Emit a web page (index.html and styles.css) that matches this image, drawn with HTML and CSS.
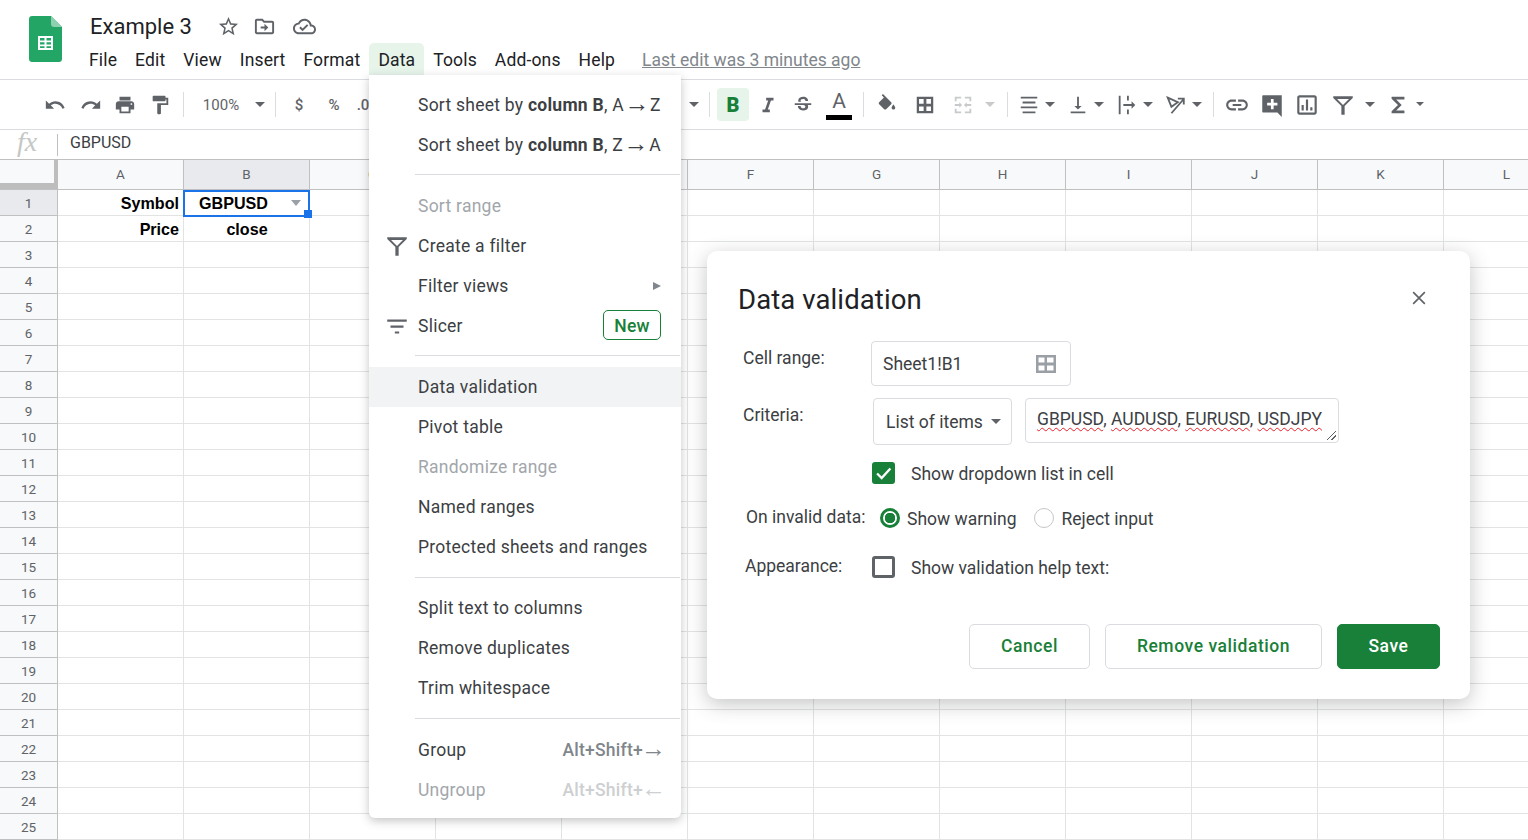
FILE: index.html
```html
<!DOCTYPE html>
<html lang="en">
<head>
    <meta charset="UTF-8">
    <title>Example 3 - Google Sheets</title>
    <link rel="stylesheet" href="styles.css">
</head>
<body>

    <header class="topbar">
        <svg class="logo" viewBox="0 0 33 46">
            <path d="M3 0h19l11 11v32c0 1.7-1.3 3-3 3H3c-1.7 0-3-1.3-3-3V3c0-1.7 1.300-3 3-3z" fill="#23a566"/>
            <path d="M22 0l11 11h-8c-1.700 0-3-1.300-3-3z" fill="#8ed1b1"/>
            <path d="M9 20h15v14H9zm2 2v2.500h4.500V22zm6.500 0v2.500H22V22zM11 26.200v2.300h4.500v-2.300zm6.500 0v2.300H22v-2.300zM11 30.200V32h4.500v-1.800zm6.500 0V32H22v-1.800z" fill="#fff" fill-rule="evenodd"/>
        </svg>
        <div class="topbar-main">
            <div class="title-row">
                <span class="doc-title">Example 3</span>
                <svg class="title-icon star" viewBox="0 0 24 24"><path d="M22 9.240l-7.190-.62L12 2 9.190 8.630 2 9.240l5.460 4.730L5.820 21 12 17.270 18.180 21l-1.630-7.030L22 9.240zM12 15.400l-3.760 2.270 1-4.280-3.320-2.880 4.380-.38L12 6.100l1.710 4.040 4.380.38-3.320 2.880 1 4.280L12 15.400z"/></svg>
                <svg class="title-icon folder" viewBox="0 0 24 24"><path d="M20 6h-8l-2-2H4c-1.100 0-2 .9-2 2v12c0 1.100.9 2 2 2h16c1.100 0 2-.9 2-2V8c0-1.100-.9-2-2-2zm0 12H4V6h5.170l2 2H20v10zm-8-1v-3H8v-2h4V9l4 4-4 4z"/></svg>
                <svg class="title-icon cloud" viewBox="0 0 24 24"><path d="M19.350 10.040C18.670 6.590 15.640 4 12 4 9.110 4 6.600 5.640 5.350 8.040 2.340 8.360 0 10.910 0 14c0 3.310 2.690 6 6 6h13c2.760 0 5-2.240 5-5 0-2.640-2.050-4.780-4.650-4.960zM19 18H6c-2.210 0-4-1.790-4-4 0-2.050 1.530-3.760 3.560-3.970l1.070-.11.5-.95C8.080 7.140 9.940 6 12 6c2.620 0 4.880 1.860 5.390 4.430l.3 1.500 1.530.11c1.560.1 2.780 1.410 2.780 2.960 0 1.650-1.350 3-3 3zm-9-3.820l-2.090-2.090L6.500 13.500 10 17l6.010-6.010-1.410-1.410z"/></svg>
            </div>
            <nav class="menubar">
                <span class="menubar-item">File</span>
                <span class="menubar-item">Edit</span>
                <span class="menubar-item">View</span>
                <span class="menubar-item">Insert</span>
                <span class="menubar-item">Format</span>
                <span class="menubar-item active">Data</span>
                <span class="menubar-item">Tools</span>
                <span class="menubar-item">Add-ons</span>
                <span class="menubar-item">Help</span>
                <a class="last-edit">Last edit was 3 minutes ago</a>
            </nav>
        </div>
    </header>

    <div class="toolbar">
        <span class="tb w-36"><svg viewBox="0 0 24 24"><path d="M12.500 8c-2.650 0-5.050.99-6.900 2.600L2 7v9h9l-3.620-3.620c1.390-1.160 3.160-1.880 5.120-1.880 3.540 0 6.550 2.310 7.600 5.500l2.370-.78C21.080 11.030 17.150 8 12.500 8z"/></svg></span>
        <span class="tb w-36"><svg viewBox="0 0 24 24"><path d="M18.400 10.600C16.550 8.990 14.150 8 11.500 8c-4.650 0-8.580 3.030-9.960 7.220L3.900 16c1.050-3.190 4.050-5.500 7.600-5.500 1.950 0 3.730.72 5.120 1.880L13 16h9V7l-3.600 3.600z"/></svg></span>
        <span class="tb w-32"><svg viewBox="0 0 24 24"><path d="M19 8H5c-1.660 0-3 1.340-3 3v6h4v4h12v-4h4v-6c0-1.660-1.340-3-3-3zm-3 11H8v-5h8v5zm3-7c-.55 0-1-.45-1-1s.45-1 1-1 1 .45 1 1-.45 1-1 1zm-1-9H6v4h12V3z"/></svg></span>
        <span class="tb w-38"><svg viewBox="0 0 24 24"><path d="M18 4V3c0-.55-.45-1-1-1H5c-.55 0-1 .45-1 1v4c0 .55.45 1 1 1h12c.55 0 1-.45 1-1V6h1v4H9v11c0 .55.45 1 1 1h2c.55 0 1-.45 1-1v-9h8V4h-3z"/></svg></span>
        <span class="sep s-4"></span>
        <span class="tb zoom">100%</span>
        <span class="caret w-16"></span>
        <span class="sep s-7"></span>
        <span class="tb tb-text w-46">$</span>
        <span class="tb tb-text w-24">%</span>
        <span class="tb tb-text decimals">.0</span>
        <span class="tb under-menu"></span>
        <span class="caret w-16"></span>
        <span class="sep s-7"></span>
        <span class="tb bold-btn">B</span>
        <span class="tb w-38"><svg viewBox="0 0 24 24"><path d="M10 4v3h2.210l-3.420 10H6v3h8v-3h-2.210l3.420-10H18V4z"/></svg></span>
        <span class="tb w-32"><svg viewBox="0 0 24 24"><path d="M6.850 7.080C6.850 4.370 9.450 3 12.240 3c1.640 0 3 .49 3.900 1.280.77.65 1.460 1.780 1.460 3.220h-3.010c0-.31-.05-.59-.15-.85-.29-.86-1.200-1.280-2.350-1.280-2.040 0-2.740 1.040-2.740 1.780 0 .52.27.95.76 1.300H6.850v.01zM21 12v-2H3v2h9.620c1.150.45 1.960.75 1.960 1.970 0 1-.81 1.670-2.280 1.670-1.540 0-2.930-.54-2.930-2.510H6.400c0 .55.08 1.130.24 1.580.81 2.290 3.290 3.300 5.670 3.300 2.270 0 5.300-.89 5.300-4.050 0-.3-.01-1.160-.48-1.940H21V12z"/></svg></span>
        <span class="tb text-color"><span class="text-color-a">A</span><span class="text-color-bar"></span></span>
        <span class="sep s-4"></span>
        <span class="tb w-46"><svg viewBox="0 0 24 24"><path d="M16.560 8.940L7.620 0 6.210 1.410l2.380 2.380-5.150 5.150c-.59.59-.59 1.540 0 2.120l5.500 5.500c.29.29.68.44 1.060.44s.77-.15 1.060-.44l5.500-5.500c.59-.58.59-1.530 0-2.120zM19 11.500s-2 2.170-2 3.500c0 1.100.9 2 2 2s2-.9 2-2c0-1.330-2-3.500-2-3.500z"/></svg></span>
        <span class="tb w-30"><svg viewBox="0 0 24 24"><path fill-rule="evenodd" d="M3 3v18h18V3H3zm7.500 15.500h-5v-5h5zm0-8h-5v-5h5zm8 8h-5v-5h5zm0-8h-5v-5h5z"/></svg></span>
        <span class="tb w-45 off"><svg viewBox="0 0 24 24"><path d="M3 3h7v2H5v3H3zM14 3h7v5h-2V5h-5zM3 16h2v3h5v2H3zM19 16h2v5h-7v-2h5zM3 11h5V9l3 3-3 3v-2H3zM21 11h-5V9l-3 3 3 3v-2h5z"/></svg></span>
        <span class="caret off w-10"></span>
        <span class="sep s-12"></span>
        <span class="tb pair"><svg viewBox="0 0 24 24"><path d="M3 3h18v2H3zM5 8.300h14v2H5zM3 13.600h18v2H3zM5 19h14v2H5z"/></svg></span>
        <span class="caret w-10"></span>
        <span class="tb pair"><svg viewBox="0 0 24 24"><path d="M16 13h-3V3h-2v10H8l4 4 4-4zM4 19v2h16v-2H4z"/></svg></span>
        <span class="caret w-10"></span>
        <span class="tb pair"><svg viewBox="0 0 24 24"><path d="M3 2h2v20H3zM12 2h2v5h-2zM12 17h2v5h-2zM8 11h9V8l4 4-4 4v-3H8z"/></svg></span>
        <span class="caret w-10"></span>
        <span class="tb pair"><svg class="line-icon" viewBox="0 0 24 24"><path d="M3 4l11 5-7 5zM7 21L20 6M14 5h6.500v6.500"/></svg></span>
        <span class="caret w-10"></span>
        <span class="sep s-11"></span>
        <span class="tb w-46"><svg class="big" viewBox="0 0 24 24"><path d="M3.900 12c0-1.710 1.390-3.100 3.100-3.100h4V7H7c-2.760 0-5 2.240-5 5s2.240 5 5 5h4v-1.900H7c-1.710 0-3.100-1.390-3.100-3.100zM8 13h8v-2H8v2zm9-6h-4v1.900h4c1.710 0 3.100 1.390 3.100 3.100s-1.390 3.100-3.100 3.100h-4V17h4c2.760 0 5-2.240 5-5s-2.240-5-5-5z"/></svg></span>
        <span class="tb w-24"><svg class="big" viewBox="0 0 24 24"><path fill-rule="evenodd" d="M3 4c0-.6.4-1 1-1h17v20l-4-4H4c-.6 0-1-.4-1-1zm8 2.500V10H7.500v2.500H11V16h2.500v-3.500H17V10h-3.500V6.500z"/></svg></span>
        <span class="tb w-46"><svg class="big" viewBox="0 0 24 24"><path d="M19 3H5c-1.100 0-2 .9-2 2v14c0 1.100.9 2 2 2h14c1.100 0 2-.9 2-2V5c0-1.100-.9-2-2-2zm0 16H5V5h14v14zM7 12h2v5H7zm4-5h2v10h-2zm4 7h2v3h-2z"/></svg></span>
        <span class="tb w-26"><svg class="big" viewBox="0 0 24 24"><path fill-rule="evenodd" d="M3 4h18v1.500l-7.500 7.500v8h-3v-8L3 5.500zm3.500 2.500l5.500 5.500 5.500-5.500z"/></svg></span>
        <span class="caret w-10 s-l9"></span>
        <span class="tb sigma"><svg viewBox="0 0 24 24"><path d="M19 3H5v2.200l7 6.800-7 6.800V21h14v-3h-9l6-6-6-6h9z"/></svg></span>
        <span class="caret small"></span>
    </div>

    <div class="formula-bar">
        <span class="fx">fx</span>
        <span class="formula-sep"></span>
        <span class="formula-value">GBPUSD</span>
    </div>

    <main class="sheet">
        <div class="col-headers">
            <div class="corner"></div>
            <div class="col-head">A</div>
            <div class="col-head selected">B</div>
            <div class="col-head">C</div>
            <div class="col-head">D</div>
            <div class="col-head">E</div>
            <div class="col-head">F</div>
            <div class="col-head">G</div>
            <div class="col-head">H</div>
            <div class="col-head">I</div>
            <div class="col-head">J</div>
            <div class="col-head">K</div>
            <div class="col-head">L</div>
        </div>
        <div class="sheet-body">
            <div class="row-headers">
                <div class="row-head selected">1</div>
                <div class="row-head">2</div>
                <div class="row-head">3</div>
                <div class="row-head">4</div>
                <div class="row-head">5</div>
                <div class="row-head">6</div>
                <div class="row-head">7</div>
                <div class="row-head">8</div>
                <div class="row-head">9</div>
                <div class="row-head">10</div>
                <div class="row-head">11</div>
                <div class="row-head">12</div>
                <div class="row-head">13</div>
                <div class="row-head">14</div>
                <div class="row-head">15</div>
                <div class="row-head">16</div>
                <div class="row-head">17</div>
                <div class="row-head">18</div>
                <div class="row-head">19</div>
                <div class="row-head">20</div>
                <div class="row-head">21</div>
                <div class="row-head">22</div>
                <div class="row-head">23</div>
                <div class="row-head">24</div>
                <div class="row-head">25</div>
            </div>
            <div class="cells">
                <div class="cell right">Symbol</div>
                <div class="cell active-cell">GBPUSD<span class="cell-arrow"></span><span class="cell-handle"></span></div>
                <div class="cell right">Price</div>
                <div class="cell center">close</div>
            </div>
        </div>
    </main>

    <div class="data-menu">
        <div class="menu-item"><span>Sort sheet by <b>column B</b>, A<span class="arrow"> →</span> Z</span></div>
        <div class="menu-item"><span>Sort sheet by <b>column B</b>, Z<span class="arrow"> →</span> A</span></div>
        <div class="menu-sep"></div>
        <div class="menu-item disabled"><span>Sort range</span></div>
        <div class="menu-item has-icon">
            <svg class="menu-icon" viewBox="0 0 24 24"><path fill-rule="evenodd" d="M3 4h18v1.500l-7.500 7.500v8h-3v-8L3 5.500zm3.500 2.500l5.500 5.500 5.500-5.500z"/></svg>
            <span>Create a filter</span>
        </div>
        <div class="menu-item"><span>Filter views</span><span class="submenu-arrow"></span></div>
        <div class="menu-item has-icon">
            <svg class="menu-icon" viewBox="0 0 24 24"><path d="M3 6h18v2H3zM6 11.500h12v2H6zM10 17h4v2h-4z"/></svg>
            <span>Slicer</span>
            <span class="new-badge">New</span>
        </div>
        <div class="menu-sep"></div>
        <div class="menu-item hover"><span>Data validation</span></div>
        <div class="menu-item"><span>Pivot table</span></div>
        <div class="menu-item disabled"><span>Randomize range</span></div>
        <div class="menu-item"><span>Named ranges</span></div>
        <div class="menu-item"><span>Protected sheets and ranges</span></div>
        <div class="menu-sep even"></div>
        <div class="menu-item"><span>Split text to columns</span></div>
        <div class="menu-item"><span>Remove duplicates</span></div>
        <div class="menu-item"><span>Trim whitespace</span></div>
        <div class="menu-sep last"></div>
        <div class="menu-item"><span>Group</span><span class="shortcut">Alt+Shift+<span class="arrow">→</span></span></div>
        <div class="menu-item disabled"><span>Ungroup</span><span class="shortcut">Alt+Shift+<span class="arrow">←</span></span></div>
    </div>

    <section class="dialog">
        <div class="dialog-head">
            <h2 class="dialog-title">Data validation</h2>
            <svg class="dialog-close" viewBox="0 0 24 24"><path d="M5 5l14 14M19 5L5 19"/></svg>
        </div>

        <div class="form-row range-row">
            <label class="form-label">Cell range:</label>
            <div class="range-input">
                <span>Sheet1!B1</span>
                <svg viewBox="0 0 24 24"><path fill-rule="evenodd" d="M2 3v18h20V3H2zm8.500 15.500H4.500v-5h6zm0-8H4.500v-5h6zm9 8h-6.500v-5h6.500zm0-8h-6.500v-5h6.500z"/></svg>
            </div>
        </div>

        <div class="form-row criteria-row">
            <label class="form-label">Criteria:</label>
            <div class="criteria-select">List of items<span class="caret w-10"></span></div>
            <div class="criteria-text">
                <span class="misspelled">GBPUSD</span>, <span class="misspelled">AUDUSD</span>, <span class="misspelled">EURUSD</span>, <span class="misspelled">USDJPY</span>
                <span class="resize-grip"></span>
            </div>
        </div>

        <div class="form-row check-row">
            <span class="checkbox checked"><svg viewBox="0 0 24 24"><path d="M5 12.500l5 5L19.500 7"/></svg></span>
            <span class="check-label">Show dropdown list in cell</span>
        </div>

        <div class="form-row invalid-row">
            <label class="form-label">On invalid data:</label>
            <span class="radio checked"></span>
            <span class="radio-label">Show warning</span>
            <span class="radio second"></span>
            <span class="radio-label">Reject input</span>
        </div>

        <div class="form-row appearance-row">
            <label class="form-label">Appearance:</label>
            <span class="checkbox"></span>
            <span class="check-label">Show validation help text:</span>
        </div>

        <div class="dialog-buttons">
            <button class="btn btn-cancel">Cancel</button>
            <button class="btn btn-remove">Remove validation</button>
            <button class="btn btn-save">Save</button>
        </div>
    </section>

</body>
</html>
```

FILE: styles.css
```css
* {
    box-sizing: border-box;
}

body {
    margin: 0;
    height: 100vh;
    overflow: hidden;
    background: #fff;
    font-family: Roboto, "Liberation Sans", sans-serif;
    font-size: 17.5px;
    color: #3c4043;
}

/* Top bar */
.topbar {
    display: flex;
    height: 80px;
    border-bottom: 1px solid #dadce0;
}

.logo {
    width: 33px;
    height: 46px;
    margin: 16px 18px 0 29px;
}

.topbar-main {
    display: flex;
    flex-direction: column;
}

.title-row {
    display: flex;
    align-items: center;
    height: 43px;
    padding: 9px 0 0 10px;
}

.doc-title {
    width: 127px;
    font-size: 22px;
    color: #202124;
}

.title-icon {
    width: 23px;
    height: 23px;
    fill: #5f6368;
}

.folder {
    margin-left: 13px;
}

.cloud {
    margin-left: 17px;
}

.menubar {
    display: flex;
    align-items: stretch;
    height: 32px;
}

.menubar-item {
    padding: 8px 9px 0;
    border-radius: 5px 5px 0 0;
    line-height: 19px;
    letter-spacing: 0.15px;
    color: #202124;
}

.menubar-item.active {
    background: #e6f4ea;
}

.last-edit {
    margin-left: 18px;
    padding-top: 8px;
    line-height: 19px;
    color: #80868b;
    text-decoration: underline;
}

/* Toolbar */
.toolbar {
    display: flex;
    align-items: center;
    height: 50px;
    padding-left: 37px;
    border-bottom: 1px solid #dadce0;
}

.tb {
    display: flex;
    flex: none;
    align-items: center;
    justify-content: center;
    height: 33px;
    color: #5f6368;
}

.tb svg {
    width: 22px;
    height: 22px;
    fill: #5f6368;
}

.tb svg.big {
    flex: none;
    width: 26px;
    height: 26px;
}

.tb .line-icon {
    fill: none;
    stroke: #5f6368;
    stroke-width: 2;
}

.w-24 { width: 24px; }
.w-26 { width: 26px; }
.w-30 { width: 30px; }
.w-32 { width: 32px; }
.w-36 { width: 36px; }
.w-38 { width: 38px; }
.w-45 { width: 45px; }
.w-46 { width: 46px; }

.sep {
    flex: none;
    width: 1px;
    height: 25px;
    background: #dadce0;
}

.s-4 { margin-left: 4px; }
.s-7 { margin-left: 7px; }
.s-11 { margin-left: 11px; }
.s-12 { margin-left: 12px; }

.caret {
    flex: none;
    position: relative;
    height: 5px;
}

.caret::after {
    content: "";
    position: absolute;
    top: 0;
    left: 50%;
    margin-left: -5px;
    border-top: 5px solid #5f6368;
    border-left: 5px solid transparent;
    border-right: 5px solid transparent;
}

.caret.w-10 { width: 10px; }
.caret.w-16 { width: 16px; }
.caret.s-l9 { margin-left: 9px; }

.caret.off::after {
    border-top-color: #c8cacc;
}

.caret.small {
    width: 8px;
}

.caret.small::after {
    margin-left: -4px;
    border-top-width: 4px;
    border-left-width: 4px;
    border-right-width: 4px;
}

.zoom {
    width: 68px;
    padding-left: 6px;
    font-size: 15px;
}

.tb-text {
    font-size: 15px;
    font-weight: 500;
}

.decimals {
    width: 28px;
    padding-left: 6px;
}

.under-menu {
    width: 312px;
}

.bold-btn {
    width: 32px;
    margin-left: 7px;
    border-radius: 4px;
    background: #e6f4ea;
    color: #188038;
    font-size: 20px;
    font-weight: 900;
}

.text-color {
    flex-direction: column;
    width: 40px;
}

.text-color-a {
    height: 25px;
    font-size: 21px;
    line-height: 23px;
}

.text-color-bar {
    width: 26px;
    height: 5px;
    background: #000;
}

.tb.off svg {
    fill: #c8cacc;
}

.pair {
    width: 33px;
    margin-left: 6px;
}

.sep + .pair {
    margin-left: 4px;
}

.sigma {
    width: 36px;
    margin-left: 5px;
}

/* Formula bar */
.formula-bar {
    display: flex;
    align-items: center;
    height: 30px;
    border-bottom: 1px solid #c0c0c0;
}

.fx {
    width: 57px;
    margin-bottom: 6px;
    padding-left: 17px;
    font-family: "Liberation Serif", serif;
    font-size: 28px;
    font-style: italic;
    color: #c4c7c5;
}

.formula-sep {
    width: 1px;
    height: 22px;
    background: #c0c0c0;
}

.formula-value {
    margin: 0 0 4px 12px;
    font-size: 16px;
    color: #3c4043;
}

/* Grid */
.sheet {
    overflow: hidden;
}

.col-headers {
    display: flex;
    width: 1570px;
    height: 30px;
    background: #f8f9fa;
    border-bottom: 1px solid #c0c0c0;
}

.corner {
    flex: none;
    width: 58px;
    border-right: 4px solid #bdbdbd;
    border-bottom: 6px solid #bdbdbd;
}

.col-head {
    flex: none;
    width: 126px;
    border-right: 1px solid #c0c0c0;
    font-size: 13.5px;
    line-height: 29px;
    text-align: center;
    color: #5f6368;
}

.col-head.selected,
.row-head.selected {
    background: #e8eaed;
}

.sheet-body {
    display: flex;
}

.row-headers {
    flex: none;
    width: 58px;
}

.row-head {
    height: 26px;
    background: #f8f9fa;
    border-right: 1px solid #c0c0c0;
    border-bottom: 1px solid #c0c0c0;
    font-size: 13.5px;
    line-height: 26px;
    text-align: center;
    color: #5f6368;
}

.cells {
    display: grid;
    flex: 1;
    grid-template-columns: 126px 126px;
    grid-auto-rows: 26px;
    height: 650px;
    background-image:
        linear-gradient(to right, transparent 125px, #e2e3e3 125px),
        linear-gradient(to bottom, transparent 25px, #e2e3e3 25px);
    background-size: 126px 26px;
    font-family: "Liberation Sans", Arial, sans-serif;
    font-size: 16.1px;
    font-weight: 700;
    color: #000;
}

.cell {
    line-height: 26px;
}

.right {
    padding-right: 5px;
    text-align: right;
}

.center {
    text-align: center;
}

.active-cell {
    position: relative;
    padding-left: 15px;
}

.active-cell::after {
    content: "";
    position: absolute;
    top: 0;
    right: 0;
    bottom: -1px;
    left: -1px;
    border: 2px solid #1a73e8;
}

.cell-arrow {
    position: absolute;
    top: 10px;
    left: 107px;
    border-top: 6px solid #9aa0a6;
    border-left: 5px solid transparent;
    border-right: 5px solid transparent;
}

.cell-handle {
    position: absolute;
    z-index: 1;
    top: 20px;
    right: -2px;
    width: 8px;
    height: 8px;
    background: #1a73e8;
}

/* Data menu */
.data-menu {
    position: absolute;
    z-index: 10;
    top: 75px;
    left: 369px;
    width: 312px;
    padding: 10px 0 8px;
    border-radius: 0 0 6px 6px;
    background: #fff;
    box-shadow: 0 3px 10px rgba(60, 64, 67, 0.3);
}

.menu-item {
    display: flex;
    align-items: center;
    justify-content: space-between;
    height: 40px;
    padding: 0 20px 0 49px;
    letter-spacing: 0.25px;
    white-space: nowrap;
    color: #3c4043;
}

.arrow {
    font-family: "Liberation Sans", sans-serif;
    font-size: 25px;
    font-weight: 400;
    line-height: 0;
    letter-spacing: -4px;
    word-spacing: -2.3px;
    vertical-align: -1px;
}

.shortcut .arrow {
    margin: 0 -3px 0 -2px;
    letter-spacing: -2px;
}

.menu-item.has-icon {
    padding-left: 15px;
    justify-content: flex-start;
}

.menu-item.hover {
    background: #f1f3f4;
}

.menu-item.disabled {
    color: #a2a6ab;
}

.menu-icon {
    width: 26px;
    height: 26px;
    margin-right: 8px;
    fill: #5f6368;
}

.menu-sep {
    height: 1px;
    margin: 9px 1px 11px 46px;
    background: #dadce0;
}

.menu-sep.even {
    margin-top: 10px;
    margin-bottom: 10px;
}

.menu-sep.last {
    margin-top: 10px;
}

.submenu-arrow {
    border-left: 8px solid #80868b;
    border-top: 4px solid transparent;
    border-bottom: 4px solid transparent;
}

.new-badge {
    width: 58px;
    height: 30px;
    margin: -2px 0 0 auto;
    border: 1px solid #188038;
    border-radius: 5px;
    font-weight: 500;
    line-height: 30px;
    text-align: center;
    color: #188038;
}

.shortcut {
    font-weight: 500;
    color: #80868b;
}

.menu-item.disabled .shortcut {
    color: #cdcfd1;
}

/* Data validation dialog */
.dialog {
    position: absolute;
    z-index: 20;
    top: 251px;
    left: 707px;
    width: 763px;
    height: 448px;
    padding: 32px 30px 30px 31px;
    border-radius: 10px;
    background: #fff;
    box-shadow: 0 5px 20px rgba(60, 64, 67, 0.3);
}

.dialog-head {
    display: flex;
    align-items: center;
    justify-content: space-between;
    height: 32px;
}

.dialog-title {
    margin: 0;
    font-size: 27.5px;
    font-weight: 400;
    letter-spacing: 0.1px;
    color: #202124;
}

.dialog-close {
    width: 20px;
    height: 20px;
    margin: -2px 11px 0 0;
    fill: none;
    stroke: #5f6368;
    stroke-width: 2;
}

.form-row {
    display: flex;
    align-items: flex-start;
}

.form-label {
    flex: none;
    padding-top: 7px;
    line-height: 20px;
}

.range-row {
    margin-top: 26px;
}

.range-row .form-label {
    width: 133px;
    padding-left: 5px;
}

.range-input {
    display: flex;
    align-items: center;
    justify-content: space-between;
    width: 200px;
    height: 45px;
    padding: 0 12px 0 11px;
    border: 1px solid #dadce0;
    border-radius: 4px;
}

.range-input svg {
    width: 24px;
    height: 24px;
    fill: #9aa0a6;
}

.criteria-row {
    margin-top: 12px;
}

.criteria-row .form-label {
    width: 135px;
    padding-left: 5px;
}

.criteria-select {
    display: flex;
    align-items: center;
    width: 139px;
    height: 47px;
    padding-left: 12px;
    border: 1px solid #dadce0;
    border-radius: 4px;
}

.criteria-select .caret {
    margin-left: 8px;
}

.criteria-text {
    position: relative;
    width: 314px;
    height: 45px;
    margin-left: 13px;
    padding: 10px 11px;
    border: 1px solid #dadce0;
    border-radius: 4px;
    line-height: 20px;
    white-space: nowrap;
}

.misspelled {
    text-decoration: underline wavy #e8202a 1px;
    text-underline-offset: 2px;
}

.resize-grip {
    position: absolute;
    right: 2px;
    bottom: 2px;
    width: 10px;
    height: 10px;
    background: linear-gradient(135deg, transparent 50%, #5f6368 50%, #5f6368 58%, transparent 58%, transparent 74%, #5f6368 74%, #5f6368 82%, transparent 82%);
}

.checkbox {
    flex: none;
    display: block;
    width: 23px;
    height: 22px;
    border: 3px solid #5f6368;
    border-radius: 3px;
}

.checkbox.checked {
    border: 0;
    background: #188038;
}

.checkbox svg {
    display: block;
    width: 23px;
    height: 22px;
    fill: none;
    stroke: #fff;
    stroke-width: 2.5;
}

.check-label,
.radio-label {
    padding-top: 2px;
    line-height: 20px;
}

.check-label {
    margin-left: 16px;
}

.check-row {
    margin-top: 17px;
    padding-left: 134px;
}

.invalid-row {
    margin-top: 23px;
}

.invalid-row .form-label {
    width: 142px;
    padding: 0 0 0 8px;
}

.radio {
    flex: none;
    width: 20px;
    height: 20px;
    margin-top: 1px;
    border: 1px solid #c4c7c5;
    border-radius: 50%;
}

.radio.checked {
    border: 3px solid #188038;
    background: radial-gradient(circle, #188038 0, #188038 5px, #fff 5.5px);
}

.radio.second {
    margin-left: 17px;
}

.radio.second + .radio-label {
    margin-left: 8px;
}

.radio-label {
    margin-left: 7px;
}

.appearance-row {
    margin-top: 27px;
}

.appearance-row .form-label {
    width: 134px;
    padding: 0 0 0 7px;
}

.dialog-buttons {
    display: flex;
    justify-content: flex-end;
    gap: 15px;
    margin-top: 46px;
}

.btn {
    height: 45px;
    padding: 0 0 2px;
    border: 1px solid #dadce0;
    border-radius: 5px;
    background: #fff;
    font-family: inherit;
    font-size: 17.5px;
    font-weight: 500;
    letter-spacing: 0.55px;
    color: #188038;
}

.btn-cancel {
    width: 121px;
}

.btn-remove {
    width: 217px;
}

.btn-save {
    width: 103px;
    border-color: #188038;
    background: #188038;
    color: #fff;
}
```
